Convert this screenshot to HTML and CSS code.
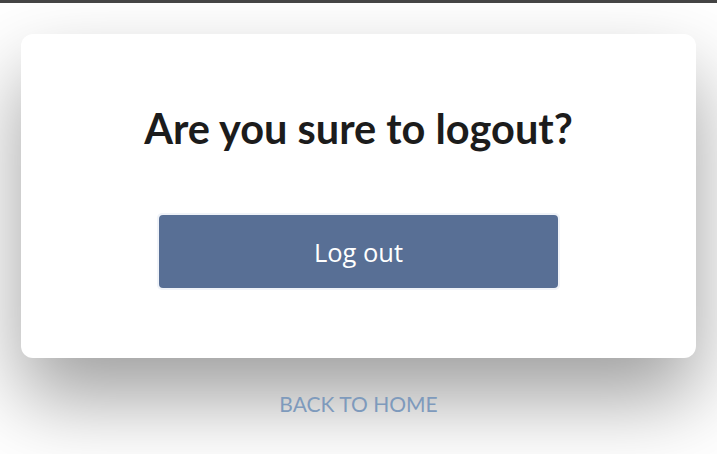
FILE: index.html
```html
<!DOCTYPE html>
<html>
<head>
<meta charset="utf-8">
<link rel="stylesheet" href="styles.css">
</head>
<body>
<div class="page">
  <div class="card">
    <h1 class="title">Are you sure to logout?</h1>
    <div class="btn-wrap">
      <button class="btn">Log out</button>
    </div>
  </div>
  <a class="back" href="#">BACK TO HOME</a>
</div>
</body>
</html>
```
FILE: styles.css
```css
html, body {
  margin: 0;
  padding: 0;
  background: #ffffff;
}
body {
  border-top: 3px solid #444444;
  font-family: Lato, "Liberation Sans", sans-serif;
  height: 451px;
  overflow: hidden;
}
.page {
  display: flex;
  flex-direction: column;
  align-items: center;
  padding: 31px 21px 0;
}
.card {
  box-sizing: border-box;
  width: 100%;
  height: 324px;
  background: #ffffff;
  border-radius: 12px;
  box-shadow: 0 40px 80px rgba(0, 0, 0, 0.38);
  display: flex;
  flex-direction: column;
  align-items: center;
  padding-top: 68px;
}
.title {
  margin: 0;
  font-family: Lato, sans-serif;
  font-weight: 700;
  font-size: 41.5px;
  line-height: 52px;
  color: #1c1c1c;
}
.btn-wrap {
  margin-top: 59px;
  padding: 2px;
  border-radius: 5px;
  background: #f0f3f8;
}
.btn {
  display: block;
  width: 399px;
  height: 73px;
  border: none;
  border-radius: 4px;
  background: #586f95;
  color: #ffffff;
  font-family: "Open Sans", sans-serif;
  font-size: 25.5px;
  cursor: pointer;
}
.back {
  margin-top: 33px;
  font-family: Lato, sans-serif;
  font-size: 21px;
  color: #7e9abc;
  text-decoration: none;
}
```
